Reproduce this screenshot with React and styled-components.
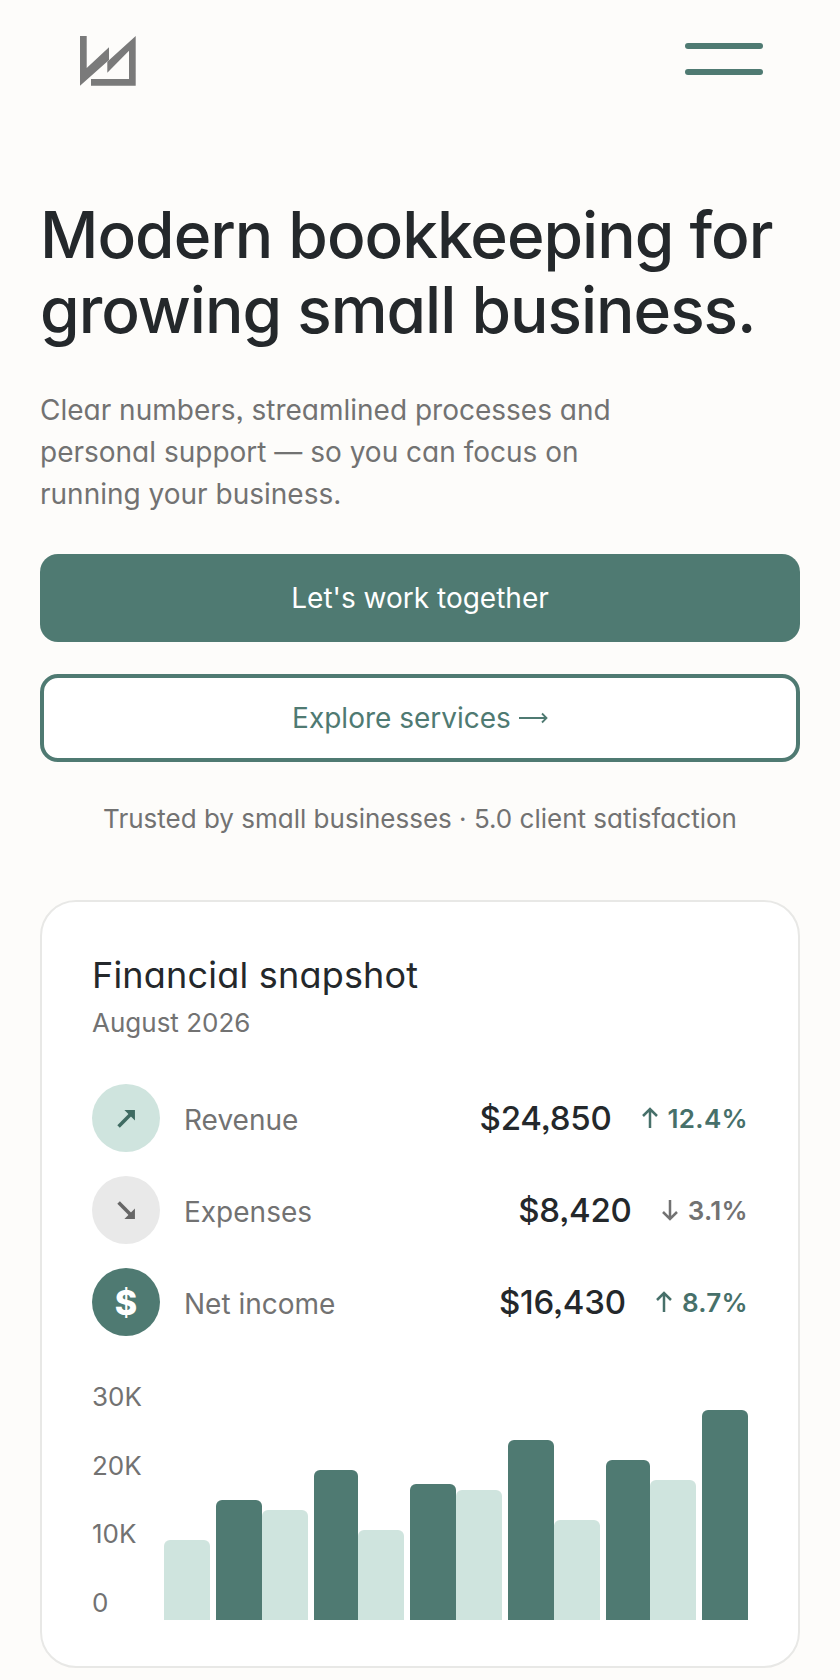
import React from 'react'
import styled, { createGlobalStyle } from 'styled-components'

const Global = createGlobalStyle`
  html, body { margin: 0; padding: 0; background: #fdfcfa; }
  * { box-sizing: border-box; }
  body {
    font-family: Inter, "Liberation Sans", sans-serif;
    font-feature-settings: "cv11", "ss03";
    color: #24282b;
  }
`

const Page = styled.div`
  width: 840px;
  height: 1680px;
  overflow: hidden;
  padding: 0 40px;
`

const Header = styled.header`
  height: 120px;
  display: flex;
  align-items: center;
  justify-content: space-between;
  padding: 0 37px 0 40px;
`

const Logo = styled.svg`
  display: block;
  width: 56px;
  height: 50px;
  margin-top: 2px;
`

const MenuButton = styled.button`
  width: 78px;
  height: 32px;
  margin-top: -2px;
  padding: 0;
  border: 0;
  background: none;
  display: flex;
  flex-direction: column;
  justify-content: space-between;
  span {
    display: block;
    height: 6px;
    border-radius: 3px;
    background: #4f7a72;
  }
`

const Title = styled.h1`
  margin: 77px 0 0;
  font-size: 64px;
  line-height: 75px;
  font-weight: 500;
  letter-spacing: -1px;
  color: #24282b;
`

const Lead = styled.p`
  margin: 42px 0 0;
  width: 600px;
  font-size: 28px;
  line-height: 42px;
  color: #727272;
`

const PrimaryButton = styled.a`
  display: flex;
  align-items: center;
  justify-content: center;
  margin-top: 39px;
  height: 88px;
  border-radius: 18px;
  background: #4f7a72;
  color: #fff;
  font-size: 28px;
  font-weight: 400;
`

const SecondaryButton = styled.a`
  display: flex;
  align-items: center;
  justify-content: center;
  gap: 8px;
  margin-top: 32px;
  height: 88px;
  border-radius: 18px;
  border: 4px solid #4f7a72;
  background: #fff;
  color: #4f7a72;
  font-size: 28px;
`

const Trust = styled.p`
  margin: 40px 0 0;
  text-align: center;
  font-size: 26px;
  line-height: 34px;
  color: #727272;
`

const Card = styled.section`
  margin-top: 64px;
  height: 768px;
  padding: 51px 50px 0 50px;
  border: 2px solid #e8e8e6;
  border-radius: 36px;
  background: #fff;
`

const CardTitle = styled.h2`
  margin: 0;
  font-size: 36px;
  line-height: 44px;
  font-weight: 400;
  letter-spacing: 0.2px;
  color: #24282b;
`

const CardDate = styled.div`
  margin-top: 9px;
  font-size: 26px;
  line-height: 34px;
  color: #727272;
`

const Metrics = styled.div`
  margin-top: 44px;
  display: flex;
  flex-direction: column;
  gap: 24px;
`

const Metric = styled.div`
  height: 68px;
  display: flex;
  align-items: center;
`

const Badge = styled.div`
  width: 68px;
  height: 68px;
  flex: none;
  border-radius: 50%;
  display: flex;
  align-items: center;
  justify-content: center;
  background: ${p => p.$bg};
  color: ${p => p.$fg};
  font-size: 34px;
  font-weight: 800;
`

const MetricName = styled.div`
  margin: 4px 0 0 24px;
  flex: 1;
  font-size: 28px;
  color: #727272;
`

const MetricValue = styled.div`
  font-size: 33px;
  font-weight: 500;
  letter-spacing: -0.2px;
  color: #24282b;
`

const Change = styled.div`
  margin-left: 29px;
  display: flex;
  align-items: center;
  gap: 9px;
  font-size: 26px;
  font-weight: 560;
  letter-spacing: 0.3px;
  color: ${p => p.$color};
`

const Chart = styled.div`
  margin-top: 44px;
  height: 240px;
  display: flex;
  align-items: flex-end;
`

const Axis = styled.div`
  width: 72px;
  height: 238px;
  margin-bottom: 1px;
  flex: none;
  display: flex;
  flex-direction: column;
  justify-content: space-between;
  font-size: 26px;
  line-height: 32px;
  color: #727272;
`

const Bars = styled.div`
  flex: 1;
  height: 210px;
  display: flex;
  align-items: flex-end;
`

const Bar = styled.div`
  flex: 0 0 ${p => p.$w}px;
  margin-left: ${p => (p.$gap ? '6px' : '0')};
  border-radius: 6px 6px 0 0;
  background: ${p => (p.$dark ? '#4f7a72' : '#cfe4de')};
`

const ArrowUp = () => (
  <svg width="18" height="22" viewBox="0 0 18 22" fill="none" stroke="currentColor" strokeWidth="2.5">
    <path d="M9 21V2M2 9l7-7 7 7" />
  </svg>
)

const ArrowDown = () => (
  <svg width="18" height="22" viewBox="0 0 18 22" fill="none" stroke="currentColor" strokeWidth="2.5">
    <path d="M9 1v19M2 13l7 7 7-7" />
  </svg>
)

const ArrowRight = () => (
  <svg width="29" height="14" viewBox="0 0 29 14" fill="none" stroke="currentColor" strokeWidth="1.8">
    <path d="M0 7h27M23 2.5 27.5 7 23 11.5" />
  </svg>
)

const DiagUp = () => (
  <svg width="19" height="19" viewBox="0 0 18 18" fill="none">
    <path d="M1.5 16.5 13 5" stroke="currentColor" strokeWidth="3.4" />
    <path d="M7 1h10v10z" fill="currentColor" />
  </svg>
)

const DiagDown = () => (
  <svg width="19" height="19" viewBox="0 0 18 18" fill="none">
    <path d="M1.5 1.5 13 13" stroke="currentColor" strokeWidth="3.4" />
    <path d="M7 17h10V7z" fill="currentColor" />
  </svg>
)

const metrics = [
  { name: 'Revenue', value: '$24,850', change: '12.4%', up: true, bg: '#cfe4de', fg: '#3f6b62', icon: <DiagUp />, color: '#47706a' },
  { name: 'Expenses', value: '$8,420', change: '3.1%', up: false, bg: '#e9e9e9', fg: '#666', icon: <DiagDown />, color: '#727272' },
  { name: 'Net income', value: '$16,430', change: '8.7%', up: true, bg: '#4f7a72', fg: '#fff', icon: '$', color: '#47706a' },
]

const bars = [
  { h: 80, w: 46 },
  { h: 120, w: 46, dark: true, gap: true },
  { h: 110, w: 46 },
  { h: 150, w: 44, dark: true, gap: true },
  { h: 90, w: 46 },
  { h: 136, w: 46, dark: true, gap: true },
  { h: 130, w: 46 },
  { h: 180, w: 46, dark: true, gap: true },
  { h: 100, w: 46 },
  { h: 160, w: 44, dark: true, gap: true },
  { h: 140, w: 46 },
  { h: 210, w: 46, dark: true, gap: true },
]

export default function App() {
  return (
    <Page>
      <Global />
      <Header>
        <Logo viewBox="0 0 56 50" fill="#7a7a7a">
          <path d="M0 0h6.7v32L29 11.3V24L0 49.7z" />
          <path d="M55.7 0v49.7H11V43h38V14.7L27.3 36.7V25.7z" />
        </Logo>
        <MenuButton aria-label="Menu">
          <span />
          <span />
        </MenuButton>
      </Header>
      <Title>Modern bookkeeping for growing small business.</Title>
      <Lead>Clear numbers, streamlined processes and personal support — so you can focus on running your business.</Lead>
      <PrimaryButton>Let's work together</PrimaryButton>
      <SecondaryButton>Explore services <ArrowRight /></SecondaryButton>
      <Trust>Trusted by small businesses · 5.0 client satisfaction</Trust>
      <Card>
        <CardTitle>Financial snapshot</CardTitle>
        <CardDate>August 2026</CardDate>
        <Metrics>
          {metrics.map(m => (
            <Metric key={m.name}>
              <Badge $bg={m.bg} $fg={m.fg}>{m.icon}</Badge>
              <MetricName>{m.name}</MetricName>
              <MetricValue>{m.value}</MetricValue>
              <Change $color={m.color}>
                {m.up ? <ArrowUp /> : <ArrowDown />}
                {m.change}
              </Change>
            </Metric>
          ))}
        </Metrics>
        <Chart>
          <Axis>
            <span>30K</span>
            <span>20K</span>
            <span>10K</span>
            <span>0</span>
          </Axis>
          <Bars>
            {bars.map((b, i) => (
              <Bar key={i} $dark={b.dark} $gap={b.gap} $w={b.w} style={{ height: b.h }} />
            ))}
          </Bars>
        </Chart>
      </Card>
    </Page>
  )
}
